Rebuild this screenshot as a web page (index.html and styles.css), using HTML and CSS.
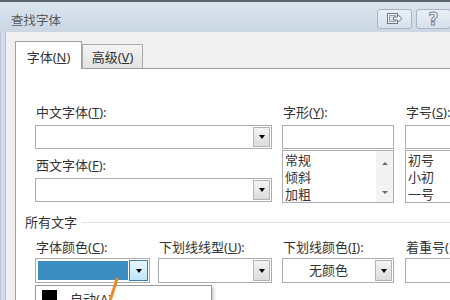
FILE: index.html
```html
<!DOCTYPE html>
<html lang="zh-CN">
<head>
    <meta charset="UTF-8">
    <meta name="viewport" content="width=device-width, initial-scale=1.0">
    <title>查找字体</title>
    <link rel="stylesheet" href="styles.css">
</head>
<body>
    <div class="window">
        <!-- Title bar -->
        <div class="titlebar">
            <span class="title">查找字体</span>
            <div class="title-buttons">
                <button class="tbtn">
                    <svg width="16" height="12" viewBox="0 0 16 12">
                        <rect x="0.5" y="0.5" width="10" height="10" fill="#eef2f6" stroke="#6f7986"/>
                        <rect x="2.5" y="2.5" width="6" height="6" fill="#d9e0e8" stroke="#98a2ae"/>
                        <path d="M6.5 4 H10.5 V1.5 L15 5.5 L10.5 9.5 V7 H6.5 Z" fill="#f4f7fa" stroke="#6f7986" stroke-linejoin="round"/>
                    </svg>
                </button>
                <button class="tbtn help">?</button>
            </div>
        </div>

        <div class="frame">
            <div class="client">
                <!-- Tabs -->
                <div class="tabs">
                    <div class="tab active">字体(<u>N</u>)</div>
                    <div class="tab">高级(<u>V</u>)</div>
                </div>

                <!-- Tab panel -->
                <div class="panel">
                    <div class="font-grid">
                        <div class="col">
                            <label class="field-label">中文字体(<u>T</u>):</label>
                            <div class="combo wide"><span class="combo-text"></span><span class="drop"><i></i></span></div>
                            <label class="field-label second">西文字体(<u>F</u>):</label>
                            <div class="combo wide"><span class="combo-text"></span><span class="drop"><i></i></span></div>
                        </div>
                        <div class="col">
                            <label class="field-label">字形(<u>Y</u>):</label>
                            <div class="textbox"></div>
                            <div class="listbox">
                                <ul>
                                    <li>常规</li>
                                    <li>倾斜</li>
                                    <li>加粗</li>
                                </ul>
                                <div class="scroll"><span class="up"></span><span class="down"></span></div>
                            </div>
                        </div>
                        <div class="col">
                            <label class="field-label">字号(<u>S</u>):</label>
                            <div class="textbox"></div>
                            <div class="listbox">
                                <ul>
                                    <li>初号</li>
                                    <li>小初</li>
                                    <li>一号</li>
                                </ul>
                                <div class="scroll"><span class="up"></span><span class="down"></span></div>
                            </div>
                        </div>
                    </div>

                    <div class="group-title">所有文字</div>

                    <div class="effects-grid">
                        <div class="col">
                            <label class="field-label">字体颜色(<u>C</u>):</label>
                            <div class="combo color-field">
                                <span class="swatch"></span>
                                <span class="drop hot"><i></i></span>
                                <!-- open colour menu -->
                                <div class="popup">
                                    <div class="popup-item"><span class="black-box"></span><span>自动(<u>A</u>)</span></div>
                                </div>
                            </div>
                        </div>
                        <div class="col">
                            <label class="field-label">下划线线型(<u>U</u>):</label>
                            <div class="combo w114"><span class="combo-text"></span><span class="drop"><i></i></span></div>
                        </div>
                        <div class="col">
                            <label class="field-label">下划线颜色(<u>I</u>):</label>
                            <div class="combo w112"><span class="combo-text">无颜色</span><span class="drop"><i></i></span></div>
                        </div>
                        <div class="col">
                            <label class="field-label">着重号(·):</label>
                            <div class="combo w112"><span class="combo-text"></span><span class="drop"><i></i></span></div>
                        </div>
                    </div>
                </div>
            </div>
        </div>

        <!-- orange pointer drawn on the screenshot -->
        <svg class="annotation" width="18" height="26" viewBox="0 0 18 26">
            <line x1="13" y1="3" x2="6" y2="25" stroke="#ec8a26" stroke-width="3" stroke-linecap="round"/>
        </svg>
    </div>
</body>
</html>
```

FILE: styles.css
```css
/* Dialog window */
body {
    margin: 0;
    font-family: "Noto Sans", "Noto Sans CJK SC", sans-serif;
    font-size: 13px;
    color: #333;
}

.window {
    width: 450px;
    height: 300px;
    overflow: hidden;
    position: relative;
    background-color: #d3dde9;
}

.titlebar {
    height: 32px;
    box-sizing: border-box;
    border-top: 2px solid #5d646d;
    background: linear-gradient(#dbe4ee, #cad6e4);
    display: flex;
    align-items: flex-start;
    padding-left: 11px;
}

.title {
    margin-top: 11px;
    line-height: 16px;
    font-size: 12.5px;
    color: #5a5a5a;
}

.title-buttons {
    margin-left: auto;
    margin-top: 7px;
    margin-right: -1px;
    display: flex;
    gap: 4px;
}

.tbtn {
    width: 35px;
    height: 20px;
    box-sizing: border-box;
    padding: 0;
    border: 1px solid #a7b5c7;
    border-radius: 3px;
    background: linear-gradient(#e9eff5, #d6e0eb);
    display: flex;
    align-items: center;
    justify-content: center;
}

.tbtn.help {
    font-family: "DejaVu Sans", sans-serif;
    font-weight: bold;
    font-size: 17px;
    color: #f4f6f8;
    -webkit-text-stroke: 1px #7b8592;
}

.frame {
    padding-left: 4px;
    border-left: 1px solid #bcc7d4;
}

.client {
    background-color: #f0f0f0;
    border-left: 1px solid #b2bfce;
    height: 268px;
}

/* Tabs */
.tabs {
    display: flex;
    align-items: flex-end;
    padding: 9px 0 0 9px;
}

.tab {
    width: 61px;
    height: 24px;
    box-sizing: border-box;
    padding-top: 4px;
    line-height: 16px;
    text-align: center;
    border: 1px solid #a9a9a9;
    border-bottom: none;
    background: linear-gradient(#f4f4f4, #e2e2e2);
}

.tab.active {
    width: 67px;
    height: 28px;
    padding-top: 7px;
    margin-bottom: -1px;
    background: #fff;
    border-color: #a0a0a0;
    position: relative;
    z-index: 1;
}

.panel {
    margin-left: 9px;
    border-top: 1px solid #a0a0a0;
    border-left: 1px solid #a0a0a0;
    background-color: #fff;
    padding: 35px 0 0 19px;
    height: 240px;
    white-space: nowrap;
}

.font-grid {
    display: grid;
    grid-template-columns: 247px 123px 112px;
}

.field-label {
    display: block;
    height: 16px;
    line-height: 16px;
    padding-left: 1px;
    margin-bottom: 5px;
}

.field-label.second {
    margin-top: 8px;
}

/* Combo boxes */
.combo {
    height: 24px;
    box-sizing: border-box;
    border: 1px solid #abadb3;
    background-color: #fff;
    display: flex;
}

.combo.wide {
    width: 237px;
}

.combo-text {
    flex: 1;
    text-align: center;
    line-height: 23px;
}

.drop {
    width: 17px;
    margin: 1px;
    box-sizing: border-box;
    border: 1px solid #b3b3b3;
    background: linear-gradient(#f3f3f3, #dcdcdc);
    display: flex;
    align-items: center;
    justify-content: center;
}

.drop i {
    width: 0;
    height: 0;
    border-left: 3px solid transparent;
    border-right: 3px solid transparent;
    border-top: 4px solid #000;
}

.drop.hot {
    width: 19px;
    border-color: #3c7fb1;
    background: linear-gradient(#eaf6fd, #bde4fa);
}

.textbox {
    width: 112px;
    height: 24px;
    box-sizing: border-box;
    border: 1px solid #abadb3;
}

.listbox {
    width: 112px;
    height: 53px;
    margin-top: 1px;
    box-sizing: border-box;
    border: 1px solid #abadb3;
    display: flex;
    overflow: hidden;
}

.listbox ul {
    flex: 1;
    list-style: none;
    margin: 0;
    padding: 1px 0 0 2px;
    line-height: 17px;
}

.scroll {
    width: 17px;
    background-color: #f3f3f3;
    display: flex;
    flex-direction: column;
    justify-content: space-between;
    align-items: center;
    padding: 11px 0 8px;
    box-sizing: border-box;
}

.scroll .up {
    border-left: 3px solid transparent;
    border-right: 3px solid transparent;
    border-bottom: 3px solid #6a6a6a;
}

.scroll .down {
    border-left: 3px solid transparent;
    border-right: 3px solid transparent;
    border-top: 3px solid #6a6a6a;
}

/* Section title */
.group-title {
    margin: 11px 0 0 -10px;
    display: flex;
    align-items: center;
    gap: 5px;
    line-height: 16px;
}

.group-title::after {
    content: "";
    flex: 1;
    height: 1px;
    background-color: #dde2e7;
}

/* Bottom row */
.effects-grid {
    display: grid;
    grid-template-columns: 123px 124px 123px 112px;
    margin-top: 9px;
}

.effects-grid .field-label {
    margin-bottom: 3px;
}

.effects-grid .combo {
    height: 25px;
}

.color-field {
    width: 115px;
    position: relative;
}

.swatch {
    flex: 1;
    margin: 2px 0 2px 2px;
    background-color: #3b8ec0;
}

.w114 {
    width: 114px;
}

.w112 {
    width: 112px;
}

/* Colour menu */
.popup {
    position: absolute;
    top: calc(100% + 3px);
    left: -1px;
    width: 177px;
    height: 40px;
    box-sizing: border-box;
    border: 1px solid #979797;
    background-color: #fff;
    box-shadow: 2px 2px 3px rgba(0, 0, 0, 0.2);
    z-index: 2;
}

.popup-item {
    display: flex;
    align-items: flex-start;
    padding: 4px 6px;
    line-height: 16px;
}

.black-box {
    width: 15px;
    height: 15px;
    background-color: #000;
    margin-right: 13px;
}

.popup-item span + span {
    margin-top: 1px;
}

.annotation {
    position: absolute;
    left: 104px;
    top: 276px;
    z-index: 3;
}
```
